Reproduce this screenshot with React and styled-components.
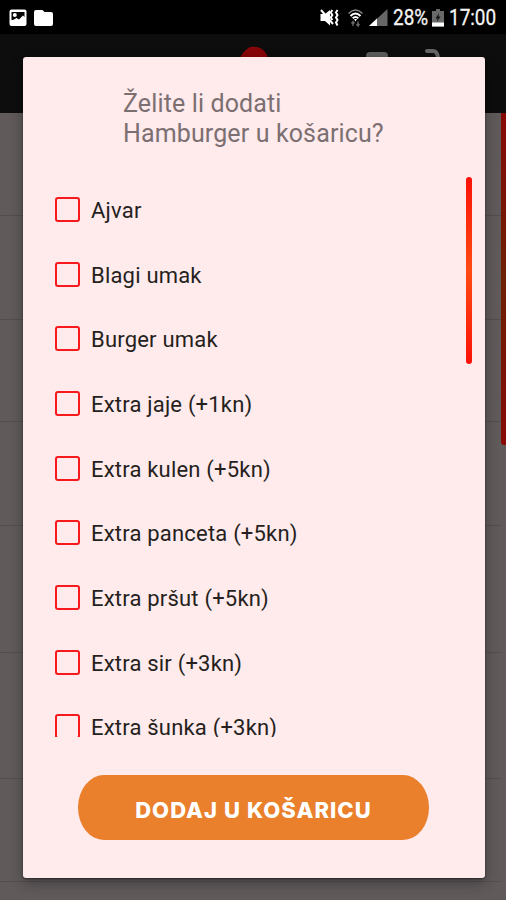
import React from "react";
import styled, { createGlobalStyle } from "styled-components";

const GlobalStyle = createGlobalStyle`
  * { box-sizing: border-box; }
  body { margin: 0; background: #605a5b; font-family: Roboto, sans-serif; }
`;

const Screen = styled.div`
  position: relative;
  width: 506px;
  height: 900px;
  overflow: hidden;
  display: flex;
  flex-direction: column;
  background: #605a5b;
`;

const StatusBar = styled.header`
  flex: none;
  height: 34px;
  padding: 0 10px 0 8px;
  display: flex;
  align-items: center;
  justify-content: space-between;
  background: #000;
`;

const StatusGroup = styled.div`
  display: flex;
  align-items: center;
  gap: ${(p) => p.$gap}px;
`;

const StatusText = styled.span`
  width: ${(p) => p.$width}px;
  margin-left: ${(p) => p.$before}px;
  padding-top: 1px;
  font-size: 22px;
  line-height: 34px;
  white-space: nowrap;
  color: #f4f4f4;
  -webkit-text-stroke: 0.3px #f4f4f4;
  transform: scaleX(0.86);
  transform-origin: left center;
`;

const StatusIcon = styled.svg`
  display: block;
  flex: none;
  margin-left: ${(p) => p.$before || 0}px;
  margin-top: 1px;
`;

const AppBar = styled.div`
  flex: none;
  height: 79px;
  padding: 0 64px 0 240px;
  display: flex;
  justify-content: space-between;
  background: #0d0d0d;
`;

const Page = styled.main`
  flex: 1;
  display: flex;
  justify-content: space-between;
  align-items: flex-start;
`;

const MenuList = styled.div`
  width: 501px;
`;

const MenuRow = styled.div`
  height: ${(p) => p.$height}px;
  border-bottom: 1px solid #544e4f;
`;

const PageScrollbar = styled.div`
  width: 5px;
  height: 332px;
  border-radius: 0 0 0 3px;
  background: linear-gradient(#870a04, #6c2002 50%, #870a04);
`;

const Dialog = styled.section`
  position: absolute;
  left: 23px;
  top: 57px;
  width: 462px;
  height: 821px;
  border-radius: 3px;
  background: #ffeaec;
  box-shadow: 0 1px 2px rgba(0, 0, 0, 0.45), 0 5px 14px rgba(0, 0, 0, 0.32);
  display: flex;
  flex-direction: column;
`;

const Title = styled.h1`
  margin: 32px 0 0 100px;
  font-size: 25px;
  line-height: 30px;
  font-weight: 400;
  letter-spacing: 0.13px;
  color: #7b6f71;
`;

const ListArea = styled.div`
  margin-top: 28px;
  height: 560px;
  padding: 0 13px 0 32px;
  display: flex;
  justify-content: space-between;
  overflow: hidden;
`;

const Options = styled.ul`
  margin: 0;
  padding: 0;
  list-style: none;
`;

const Option = styled.li`
  height: 64.7px;
  display: flex;
  align-items: center;
  gap: 11px;
`;

const CheckBox = styled.span`
  width: 25px;
  height: 25px;
  flex: none;
  border: 2px solid #f8191c;
  border-radius: 3px;
`;

const OptionLabel = styled.span`
  font-size: 22px;
  line-height: 30px;
  letter-spacing: 0.2px;
  white-space: nowrap;
  color: #251f20;
  padding-top: 3px;
`;

const ListScrollbar = styled.div`
  width: 6px;
  height: 187px;
  border-radius: 3px;
  background: linear-gradient(#fb1208, #ff4a12 50%, #fb1208);
`;

const AddButton = styled.button`
  margin: 38px 0 0 55px;
  width: 351px;
  height: 65px;
  padding: 5px 0 0;
  border: 0;
  border-radius: 26px / 32.5px;
  background: #ea7f2c;
  color: #fff;
  font-family: Inter, sans-serif;
  font-size: 22px;
  font-weight: 800;
  letter-spacing: 1.05px;
  white-space: nowrap;
`;

const options = [
  "Ajvar",
  "Blagi umak",
  "Burger umak",
  "Extra jaje (+1kn)",
  "Extra kulen (+5kn)",
  "Extra panceta (+5kn)",
  "Extra pršut (+5kn)",
  "Extra sir (+3kn)",
  "Extra šunka (+3kn)",
];

const rowHeights = [103, 104, 102, 104, 127, 126, 103];

function ImageIcon() {
  return (
    <StatusIcon $before={1} width="18" height="18" viewBox="0 0 18 18">
      <rect x="0.5" y="0.5" width="17" height="16.5" rx="2" fill="#fff" />
      <path d="M2.500 3h13v5l-1.500-1.500-4 4-2.500-1.500L4 11H2.500Z" fill="#050505" />
      <circle cx="5.800" cy="6" r="2" fill="#fff" />
    </StatusIcon>
  );
}

function FolderIcon() {
  return (
    <StatusIcon width="19" height="18" viewBox="0 0 19 18">
      <path d="M2 1h6.5l2 2H17q2 0 2 2v10q0 2-2 2H2q-2 0-2-2V3q0-2 2-2Z" fill="#fff" />
    </StatusIcon>
  );
}

function MuteIcon() {
  return (
    <StatusIcon width="19" height="18" viewBox="0 0 19 18">
      <path d="M0.500 5h4.500l5-4v15.500l-5-4.500H.5Z" fill="#fff" />
      <path d="M1 1l12 14" stroke="#fff" strokeWidth="2" />
      <path d="M12.300 1l-1.500 2.500 1.500 2.500-1.500 2.500 1.500 2.500M17.500 1L16 3.500 17.500 6 16 8.500l1.500 2.500L16 13.500l1.500 3" stroke="#fff" strokeWidth="2" fill="none" />
    </StatusIcon>
  );
}

function WifiIcon() {
  return (
    <StatusIcon $before={9} width="15" height="18" viewBox="0 0 15 18">
      <path d="M.5 4.500Q7.500-2.500 14.500 4.500" stroke="#888" strokeWidth="1.500" fill="none" />
      <path d="M2.500 7Q7.500 2 12.500 7M4.700 9.200Q7.500 6.700 10.300 9.200" stroke="#fff" strokeWidth="2" fill="none" />
      <path d="M6 10h3l-1.500 2.500Z" fill="#fff" />
      <path d="M5 17v-4M3.500 14.500L5 12.500l1.500 2M10 12.500v4.500M8.500 15l1.500 2 1.500-2" stroke="#666" strokeWidth="1.400" fill="none" />
    </StatusIcon>
  );
}

function SignalIcon() {
  return (
    <StatusIcon $before={6} width="19" height="18" viewBox="0 0 19 18">
      <path d="M0 17L18.500 0v17Z" fill="#666" />
      <path d="M0 17L8 9.600V17Z" fill="#fff" />
    </StatusIcon>
  );
}

function BatteryIcon() {
  return (
    <StatusIcon $before={4} width="12" height="18" viewBox="0 0 12 18">
      <path d="M4 0h4v2h4v15.500H0V2h4Z" fill="#696969" />
      <path d="M7 4L3.500 9.500h2L5 13l3.500-5.500h-2Z" fill="#151515" />
      <path d="M0 13.500h12v4H0Z" fill="#fff" />
    </StatusIcon>
  );
}

function BarLogo() {
  return (
    <svg width="28" height="40" viewBox="0 0 28 40">
      <path d="M0 24q3-7 10-11 10-1 14 4 4 4 4 9Z" fill="#870608" />
    </svg>
  );
}

function BarActions() {
  return (
    <svg width="78" height="30" viewBox="0 0 78 30">
      <path d="M2 30v-8q0-4 4-4h14q4 0 4 4v8Z" fill="#5d5d5d" />
      <path d="M63 17h6q4 0 5 6" stroke="#666" strokeWidth="4" fill="none" strokeLinecap="round" />
    </svg>
  );
}

export default function App() {
  return (
    <Screen>
      <GlobalStyle />
      <StatusBar>
        <StatusGroup $gap={7}>
          <ImageIcon />
          <FolderIcon />
        </StatusGroup>
        <StatusGroup $gap={0}>
          <MuteIcon />
          <WifiIcon />
          <SignalIcon />
          <StatusText $before={5} $width={35}>28%</StatusText>
          <BatteryIcon />
          <StatusText $before={5} $width={47}>17:00</StatusText>
        </StatusGroup>
      </StatusBar>
      <AppBar>
        <BarLogo />
        <BarActions />
      </AppBar>
      <Page>
        <MenuList>
          {rowHeights.map((height, i) => (
            <MenuRow key={i} $height={height} />
          ))}
        </MenuList>
        <PageScrollbar />
      </Page>
      <Dialog role="dialog">
        <Title>
          Želite li dodati
          <br />
          Hamburger u košaricu?
        </Title>
        <ListArea>
          <Options>
            {options.map((name) => (
              <Option key={name}>
                <CheckBox role="checkbox" aria-checked="false" />
                <OptionLabel>{name}</OptionLabel>
              </Option>
            ))}
          </Options>
          <ListScrollbar />
        </ListArea>
        <AddButton>DODAJ U KOŠARICU</AddButton>
      </Dialog>
    </Screen>
  );
}
